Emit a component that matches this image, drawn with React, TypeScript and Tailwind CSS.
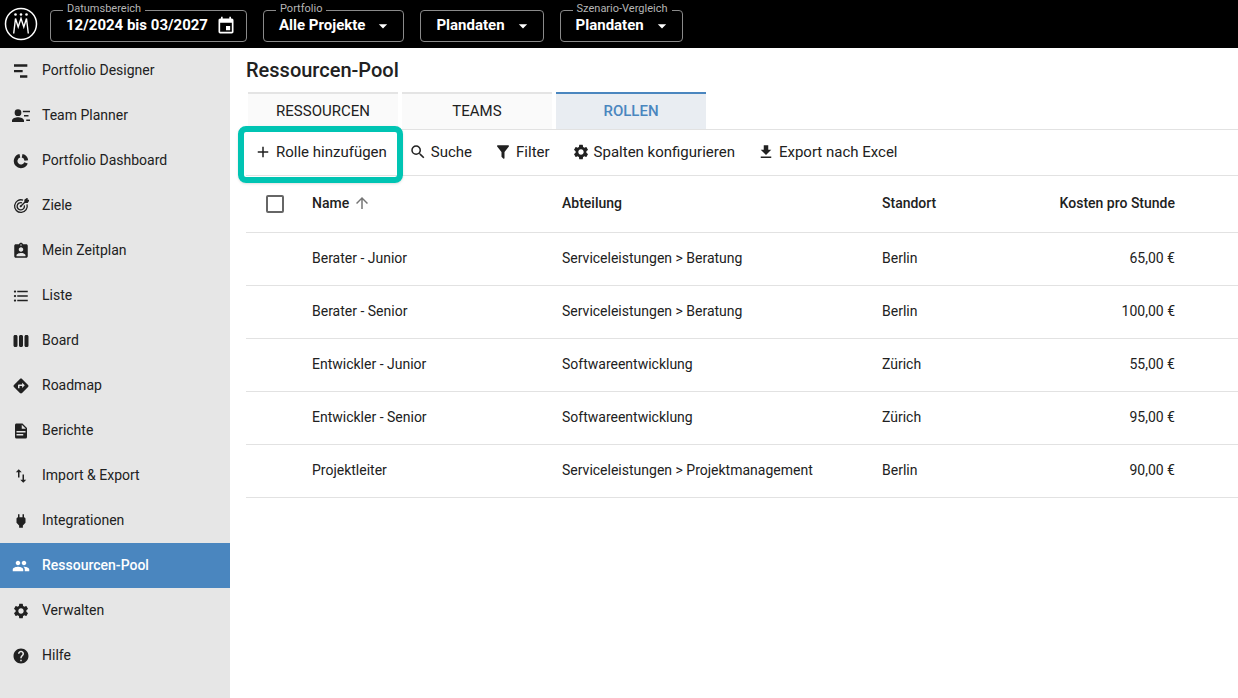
import { useState } from "react";
import type { ReactNode } from "react";
import {
  MdAdd,
  MdArrowDropDown,
  MdArrowUpward,
  MdAssignmentInd,
  MdDirections,
  MdDownload,
  MdEvent,
  MdFormatListBulleted,
  MdHelp,
  MdImportExport,
  MdPeople,
  MdPower,
  MdSearch,
  MdSettings,
  MdViewWeek,
} from "react-icons/md";

function Glyph({ d, className = "size-[18px]" }: { d: string; className?: string }) {
  return (
    <svg viewBox="0 0 24 24" fill="currentColor" className={className} aria-hidden="true">
      <path d={d} />
    </svg>
  );
}

const paths = {
  designer: "M1.500 2h20v3.500h-20zM1.500 10.500h13V14h-13zM10.500 18.500h11V22h-11z",
  team: "M8 3a4.500 4.500 0 1 1 0 9 4.500 4.500 0 0 1 0-9zM0 20v-2c0-3 5-4.500 8-4.500s8 1.500 8 4.500v2zM14.500 5H24v2h-9.500zM16 10.500h6v2h-6zM19 16.500h5v2h-5z",
  report:
    "M13 9h5.500L13 3.500V9M6 2h8l6 6v12a2 2 0 0 1-2 2H6a2 2 0 0 1-2-2V4c0-1.110.890-2 2-2m9 16v-2H6v2h9m3-4v-2H6v2h12z",
  filter:
    "M14 12v7.880c.040.300-.060.620-.290.830a.996.996 0 0 1-1.410 0l-2.010-2.010a.989.989 0 0 1-.290-.830V12h-.030L4.210 4.620a1 1 0 0 1 .170-1.400c.190-.140.400-.220.620-.220h14c.220 0 .430.080.620.220a1 1 0 0 1 .170 1.400L14.030 12H14z",
};

function DonutIcon() {
  return (
    <svg viewBox="0 0 24 24" fill="none" stroke="currentColor" strokeWidth="5.500" className="size-4" aria-hidden="true">
      <path d="M13.700 4.200A8 8 0 0 1 20 11.300" />
      <path d="M19.500 14.700A8 8 0 1 1 10.300 4.200" />
    </svg>
  );
}

function TargetIcon() {
  return (
    <svg viewBox="0 0 24 24" fill="none" stroke="currentColor" strokeWidth="2" className="size-4" aria-hidden="true">
      <path d="M15 3.200A9.500 9.500 0 1 0 21 9.500" />
      <path d="M13.500 7.200A5.500 5.500 0 1 0 17 11" />
      <path d="M11 13l7-7" />
      <path d="M18 6V3l3-2v2.500h2.500l-2 3H18" fill="currentColor" />
      <circle cx="11.500" cy="12.500" r="1.500" fill="currentColor" stroke="none" />
    </svg>
  );
}

function Logo() {
  return (
    <svg viewBox="0 0 34 34" fill="none" stroke="white" className="size-[34px]" aria-label="Logo">
      <circle cx="17" cy="17" r="15.500" strokeWidth="1.500" />
      <path d="M9.700 26.500L11.500 11.500L14.200 20L17 11.500L19.800 20L22.500 11.500L24.300 26.500" strokeWidth="1.400" />
      <g fill="white" stroke="none">
        <circle cx="11.500" cy="7.500" r="1.300" />
        <circle cx="17" cy="7.500" r="1.300" />
        <circle cx="22.500" cy="7.500" r="1.300" />
      </g>
    </svg>
  );
}

const navItems: { label: string; icon: ReactNode }[] = [
  { label: "Portfolio Designer", icon: <Glyph d={paths.designer} className="size-4" /> },
  { label: "Team Planner", icon: <Glyph d={paths.team} /> },
  { label: "Portfolio Dashboard", icon: <DonutIcon /> },
  { label: "Ziele", icon: <TargetIcon /> },
  { label: "Mein Zeitplan", icon: <MdAssignmentInd className="size-[18px]" /> },
  { label: "Liste", icon: <MdFormatListBulleted className="size-[18px]" /> },
  { label: "Board", icon: <MdViewWeek className="size-[18px]" /> },
  { label: "Roadmap", icon: <MdDirections className="size-[18px]" /> },
  { label: "Berichte", icon: <Glyph d={paths.report} /> },
  { label: "Import & Export", icon: <MdImportExport className="size-[18px]" /> },
  { label: "Integrationen", icon: <MdPower className="size-[18px]" /> },
  { label: "Ressourcen-Pool", icon: <MdPeople className="size-[18px]" /> },
  { label: "Verwalten", icon: <MdSettings className="size-[18px]" /> },
  { label: "Hilfe", icon: <MdHelp className="size-[18px]" /> },
];

const tabs = ["RESSOURCEN", "TEAMS", "ROLLEN"];

const roles = [
  { name: "Berater - Junior", department: "Serviceleistungen > Beratung", location: "Berlin", cost: "65,00 €" },
  { name: "Berater - Senior", department: "Serviceleistungen > Beratung", location: "Berlin", cost: "100,00 €" },
  { name: "Entwickler - Junior", department: "Softwareentwicklung", location: "Zürich", cost: "55,00 €" },
  { name: "Entwickler - Senior", department: "Softwareentwicklung", location: "Zürich", cost: "95,00 €" },
  { name: "Projektleiter", department: "Serviceleistungen > Projektmanagement", location: "Berlin", cost: "90,00 €" },
];

interface HeaderFieldProps {
  label?: string;
  value: string;
  icon?: ReactNode;
}

function HeaderField({ label, value, icon }: HeaderFieldProps) {
  return (
    <button
      type="button"
      className="relative flex h-8 items-center gap-2 rounded border border-[#8a8a8a] pr-2.5 pl-[15px] text-[15px] font-bold text-white"
    >
      {label && (
        <span className="absolute -top-2 left-3 bg-black px-1 text-[11px] leading-3 font-normal text-[#b5b5b5]">
          {label}
        </span>
      )}
      {value}
      {icon ?? <MdArrowDropDown className="size-5" />}
    </button>
  );
}

function ToolButton({ label, icon }: { label: string; icon: ReactNode }) {
  return (
    <button type="button" className="flex items-center gap-1 whitespace-nowrap">
      {icon}
      {label}
    </button>
  );
}

export default function App() {
  const [activeNav, setActiveNav] = useState("Ressourcen-Pool");
  const [activeTab, setActiveTab] = useState("ROLLEN");

  return (
    <div className="flex min-h-screen flex-col bg-white font-[Roboto,sans-serif] text-sm text-[#212121]">
      <header className="flex h-12 items-end gap-4 bg-black pb-1.5 pl-1">
        <div className="-mr-1 mb-px">
          <Logo />
        </div>
        <HeaderField
          label="Datumsbereich"
          value="12/2024 bis 03/2027"
          icon={<MdEvent className="size-5" />}
        />
        <HeaderField label="Portfolio" value="Alle Projekte" />
        <HeaderField value="Plandaten" />
        <HeaderField label="Szenario-Vergleich" value="Plandaten" />
      </header>

      <div className="flex flex-1">
        <nav className="w-[230px] shrink-0 bg-[#e6e6e6]">
          {navItems.map((item) => (
            <a
              key={item.label}
              href="#"
              onClick={() => setActiveNav(item.label)}
              className={
                item.label === activeNav
                  ? "flex h-[45px] items-center gap-3 bg-[#4a86bf] pl-3 font-medium text-white"
                  : "flex h-[45px] items-center gap-3 pl-3"
              }
            >
              <span className="flex w-[18px] justify-center">{item.icon}</span>
              <span className="pb-0.5">{item.label}</span>
            </a>
          ))}
        </nav>

        <main className="min-w-0 flex-1 pl-4">
          <h1 className="flex h-11 items-center text-xl font-medium">Ressourcen-Pool</h1>

          <div role="tablist" className="flex gap-1 border-b border-[#e2e2e2] pl-0.5">
            {tabs.map((tab) => (
              <button
                key={tab}
                type="button"
                role="tab"
                aria-selected={tab === activeTab}
                onClick={() => setActiveTab(tab)}
                className={
                  tab === activeTab
                    ? "h-[37px] w-[150px] border-t-2 border-[#4a86bf] bg-[#e9edf2] text-[15px] font-medium text-[#4a86bf]"
                    : "h-[37px] w-[150px] border-t-2 border-[#e4e4e4] bg-[#fafafa] text-[15px]"
                }
              >
                {tab}
              </button>
            ))}
          </div>

          <div className="flex h-[46px] items-center gap-[22px] border-b border-[#e2e2e2] pl-2 text-[15px]">
            <div className="relative">
              <ToolButton label="Rolle hinzufügen" icon={<MdAdd className="size-[18px]" />} />
              <span className="pointer-events-none absolute -top-4 -right-4 -bottom-5 -left-4 rounded-lg border-6 border-[#00c4b3] shadow" />
            </div>
            <ToolButton label="Suche" icon={<MdSearch className="size-[18px]" />} />
            <ToolButton label="Filter" icon={<Glyph d={paths.filter} />} />
            <ToolButton label="Spalten konfigurieren" icon={<MdSettings className="size-[18px]" />} />
            <ToolButton label="Export nach Excel" icon={<MdDownload className="size-[18px]" />} />
          </div>

          <table className="w-full table-fixed text-left">
            <colgroup>
              <col className="w-[66px]" />
              <col className="w-[250px]" />
              <col className="w-[320px]" />
              <col />
              <col className="w-[200px]" />
            </colgroup>
            <thead>
              <tr className="h-14 border-b border-[#e2e2e2]">
                <th className="pl-5">
                  <input
                    type="checkbox"
                    aria-label="Alle auswählen"
                    className="block size-[18px] appearance-none rounded-xs border-2 border-[#666] checked:bg-[#4a86bf]"
                  />
                </th>
                <th className="pb-0.5 font-medium">
                  <span className="flex items-center gap-1">
                    Name
                    <MdArrowUpward className="size-[18px] text-[#757575]" />
                  </span>
                </th>
                <th className="pb-0.5 font-medium">Abteilung</th>
                <th className="pb-0.5 font-medium">Standort</th>
                <th className="pr-[63px] pb-0.5 text-right font-medium">Kosten pro Stunde</th>
              </tr>
            </thead>
            <tbody>
              {roles.map((role) => (
                <tr key={role.name} className="h-[53px] border-b border-[#e2e2e2]">
                  <td />
                  <td className="pb-0.5">{role.name}</td>
                  <td className="pb-0.5">{role.department}</td>
                  <td className="pb-0.5">{role.location}</td>
                  <td className="pr-[63px] pb-0.5 text-right">{role.cost}</td>
                </tr>
              ))}
            </tbody>
          </table>
        </main>
      </div>
    </div>
  );
}
